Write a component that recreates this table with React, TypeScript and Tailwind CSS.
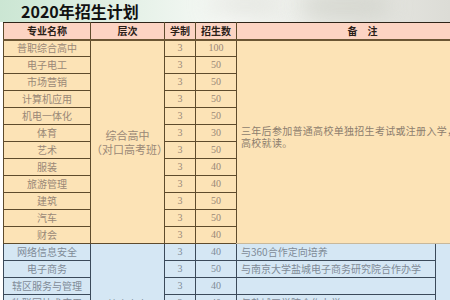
import React from 'react';

const SANS = '"Noto Sans CJK SC", "Noto Sans", sans-serif';
const SERIF = '"Liberation Serif", serif';

const ORANGE_ROWS: [string, string, string][] = [
  ['普职综合高中', '3', '100'],
  ['电子电工', '3', '50'],
  ['市场营销', '3', '50'],
  ['计算机应用', '3', '50'],
  ['机电一体化', '3', '50'],
  ['体育', '3', '30'],
  ['艺术', '3', '50'],
  ['服装', '3', '40'],
  ['旅游管理', '3', '40'],
  ['建筑', '3', '50'],
  ['汽车', '3', '50'],
  ['财会', '3', '40'],
];

const BLUE_ROWS: [string, string, string, string][] = [
  ['网络信息安全', '3', '40', '与360合作定向培养'],
  ['电子商务', '3', '50', '与南京大学盐城电子商务研究院合作办学'],
  ['辖区服务与管理', '3', '40', ''],
  ['物联网技术应用', '3', '40', '与盐城工学院合作办学'],
];

const oCell = 'border border-[#5e4b2c] text-center text-[#9a8877]';
const bCell = 'border border-[#3b4a5a] text-center text-[#7f8b97]';
const head = 'border-x border-[#5e4b2c] border-t border-t-[#2e2418] border-b-2 border-b-[#6b5634] font-semibold text-[#2a2018]';

function Title() {
  return (
    <div className="relative h-[22px] bg-gradient-to-r from-[#cbe6d3] via-[#f7f9f6] to-[#dcdcd6] overflow-hidden">
      <div className="absolute right-[60px] top-[-6px] h-[24px] w-[90px] rounded-full bg-[#c9cbc2] blur-md opacity-70" />
      <div className="absolute right-[170px] top-[-4px] h-[16px] w-[70px] rounded-full bg-[#d6d8d0] blur-md opacity-70" />
      <div className="relative pl-[21px] text-[16px] font-bold leading-[22px] text-[#111]">
        2020年招生计划
      </div>
    </div>
  );
}

export default function App() {
  return (
    <div className="w-[450px] h-[300px] overflow-hidden bg-white" style={{ fontFamily: SANS }}>
      <Title />
      <div className="pl-[3px]">
        <table className="table-fixed border-collapse w-[495px] text-[10px] leading-none">
          <colgroup>
            <col className="w-[87px]" />
            <col className="w-[74px]" />
            <col className="w-[31px]" />
            <col className="w-[41px]" />
            <col className="w-[199px]" />
            <col className="w-[63px]" />
          </colgroup>
          <thead>
            <tr className="h-[17px] bg-[#fcd4c3]">
              <th className={head}>专业名称</th>
              <th className={head}>层次</th>
              <th className={head}>学制</th>
              <th className={head}>招生数</th>
              <th colSpan={2} className={head + ' tracking-[10px]'}>备注</th>
            </tr>
          </thead>
          <tbody>
            {ORANGE_ROWS.map(([name, years, count], i) => (
              <tr key={name} className="h-[17px] bg-[#fce3b6]">
                <td className={oCell}>{name}</td>
                {i === 0 && (
                  <td rowSpan={12} className={oCell + ' text-[11px] leading-[14px]'}>
                    综合高中
                    <br />
                    （对口高考班）
                  </td>
                )}
                <td className={oCell} style={{ fontFamily: SERIF }}>{years}</td>
                <td className={oCell} style={{ fontFamily: SERIF }}>{count}</td>
                {i === 0 && (
                  <td
                    rowSpan={12}
                    colSpan={2}
                    className="border-l border-[#5e4b2c] border-b border-b-[#c8b89a] pl-[4px] pb-[10px] text-left text-[#8d7e6e] leading-[12px] tracking-[0.3px] whitespace-nowrap"
                  >
                    三年后参加普通高校单独招生考试或注册入学，全部进入
                    <br />
                    高校就读。
                  </td>
                )}
              </tr>
            ))}
            {BLUE_ROWS.map(([name, years, count, note], i) => (
              <tr key={name} className="h-[17px] bg-[#d5e7f4]">
                <td className={bCell}>{name}</td>
                {i === 0 && (
                  <td rowSpan={4} className={bCell + ' align-bottom pb-[2px]'}>
                    综合高中
                  </td>
                )}
                <td className={bCell} style={{ fontFamily: SERIF }}>{years}</td>
                <td className={bCell} style={{ fontFamily: SERIF }}>{count}</td>
                <td className={bCell + ' text-left pl-[4px] whitespace-nowrap'}>{note}</td>
                {i === 0 && <td rowSpan={4} className="border-l border-[#3b4a5a]" />}
              </tr>
            ))}
          </tbody>
        </table>
      </div>
    </div>
  );
}
